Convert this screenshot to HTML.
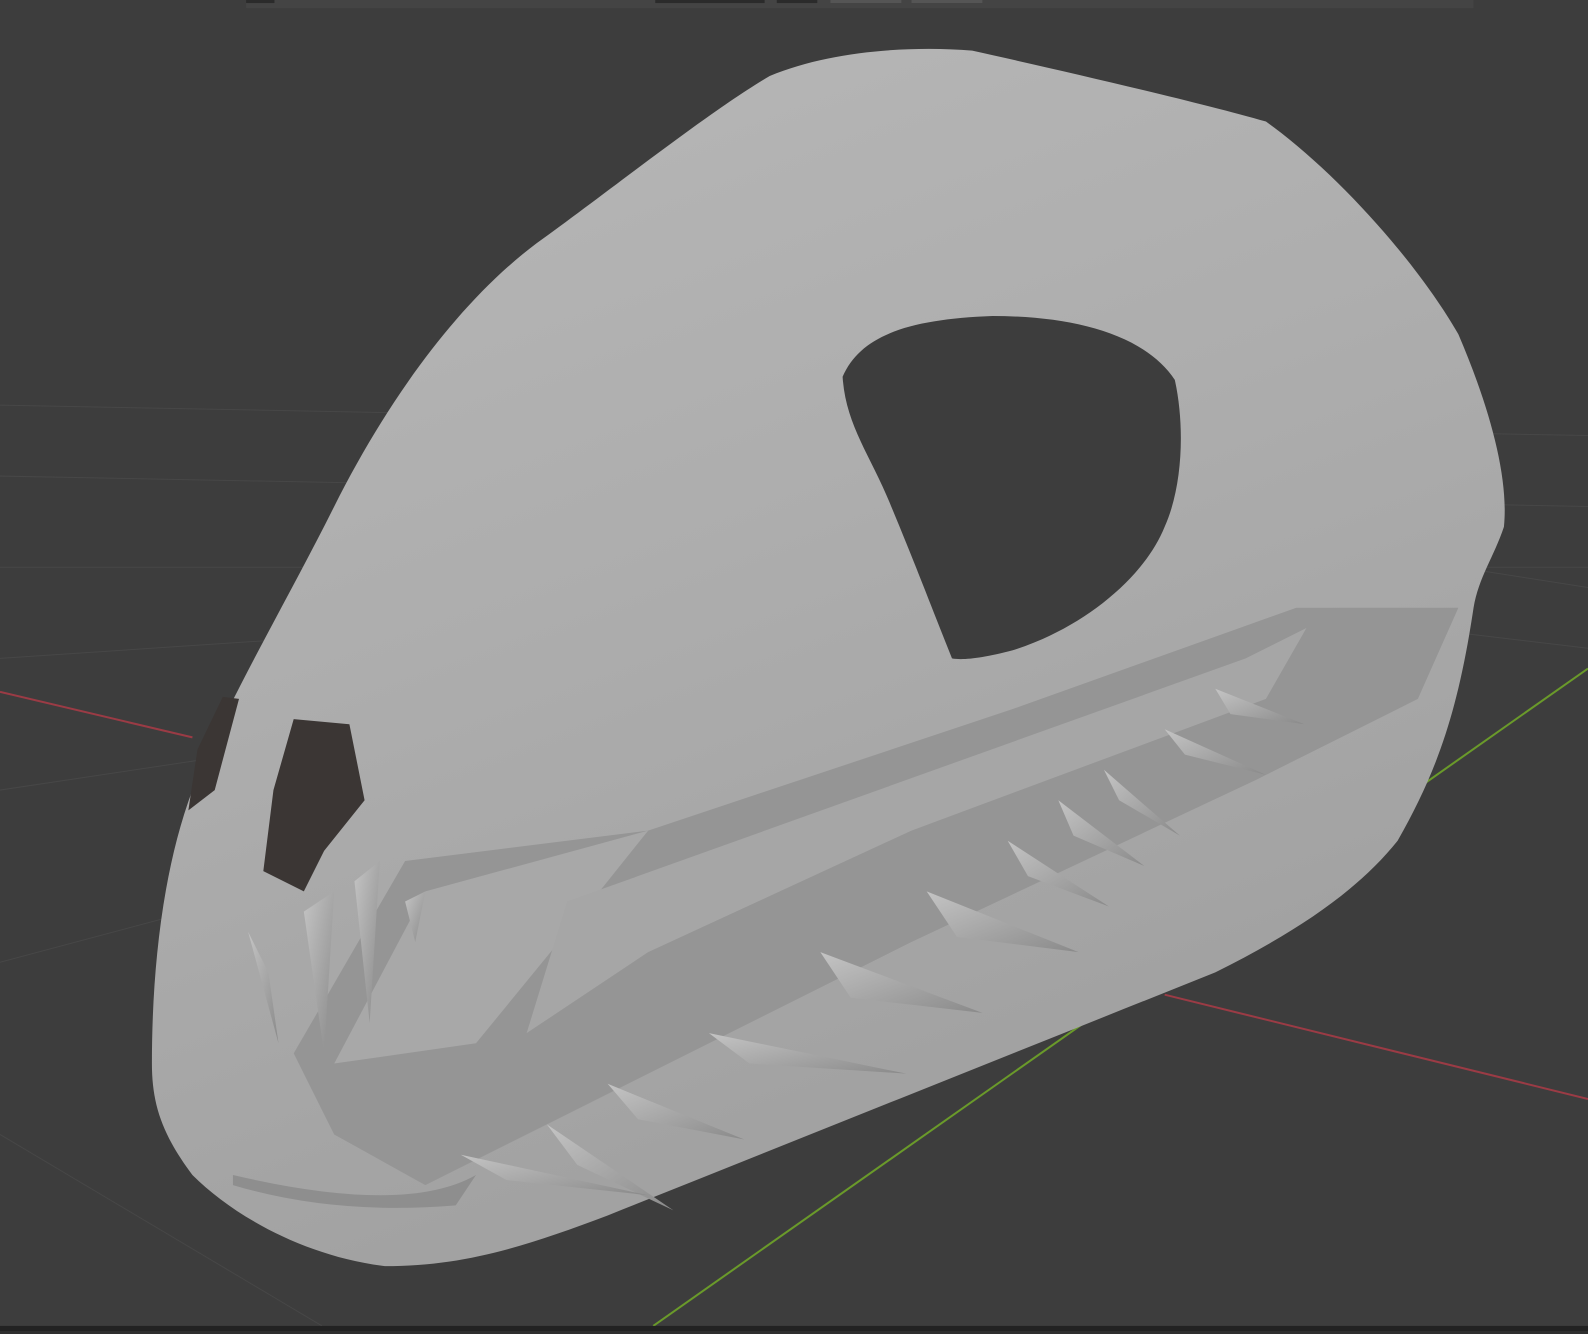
<!DOCTYPE html>
<html><head><meta charset="utf-8"><style>
html,body{margin:0;padding:0;background:#3d3d3d;overflow:hidden}
svg{display:block}
</style></head><body>
<svg width="1588" height="1334" viewBox="0 0 1568 1317" preserveAspectRatio="none" xmlns="http://www.w3.org/2000/svg">
<defs>
<linearGradient id="sk" x1="0" y1="0" x2="0.4" y2="1">
<stop offset="0" stop-color="#b8b8b8"/><stop offset="0.5" stop-color="#adadad"/><stop offset="1" stop-color="#a0a0a0"/>
</linearGradient>
<linearGradient id="tt" x1="0" y1="0" x2="1" y2="1">
<stop offset="0" stop-color="#c4c4c4"/><stop offset="1" stop-color="#8a8a8a"/>
</linearGradient>
</defs>
<rect width="1568" height="1317" fill="#3d3d3d"/>
<rect x="243" y="0" width="1212" height="8" fill="#444"/>
<rect x="243" y="0" width="28" height="3" fill="#2b2b2b"/>
<rect x="647" y="0" width="108" height="3" fill="#2b2b2b"/>
<rect x="767" y="0" width="40" height="3" fill="#2b2b2b"/>
<rect x="820" y="0" width="70" height="3" fill="#555"/>
<rect x="900" y="0" width="70" height="3" fill="#555"/>
<g stroke="#474747" stroke-width="1" fill="none">
<line x1="0" y1="400" x2="1568" y2="430"/><line x1="0" y1="470" x2="1568" y2="500"/>
<line x1="0" y1="560" x2="1568" y2="560"/><line x1="0" y1="650" x2="600" y2="610"/>
<line x1="0" y1="780" x2="400" y2="720"/><line x1="0" y1="950" x2="300" y2="870"/>
<line x1="0" y1="1120" x2="318" y2="1309"/><line x1="1440" y1="560" x2="1568" y2="580"/>
<line x1="1400" y1="620" x2="1568" y2="640"/>
</g>
<line x1="0" y1="683" x2="190" y2="728" stroke="#9b3b45" stroke-width="2"/>
<line x1="1150" y1="982" x2="1568" y2="1085" stroke="#9b3b45" stroke-width="2"/>
<line x1="645" y1="1309" x2="1568" y2="660" stroke="#6a9a2a" stroke-width="2"/>
<path d="M150,1050 C150,960 160,860 190,780 C220,700 280,600 330,500 C380,400 450,300 530,240 C600,190 700,110 760,75 C820,50 900,45 960,50 C1050,70 1180,100 1250,120 C1320,170 1400,260 1440,330 C1470,400 1490,470 1485,520 C1475,550 1460,570 1455,600 C1440,700 1420,760 1380,830 C1340,880 1280,920 1200,960 C1100,1000 1000,1040 900,1080 C800,1120 700,1160 600,1200 C520,1230 460,1250 380,1250 C300,1240 230,1200 190,1160 C160,1120 150,1090 150,1050 Z" fill="url(#sk)"/>
<path d="M400,850 L640,820 L1000,700 L1280,600 L1440,600 L1400,690 L1240,770 L900,930 L560,1100 L420,1170 L330,1120 L290,1040 Z" fill="#959595"/>
<path d="M420,880 L640,820 L560,920 L470,1030 L330,1050 Z" fill="#a8a8a8"/>
<path d="M560,890 L1230,650 L1290,620 L1250,690 L900,820 L640,940 L520,1020 Z" fill="#a6a6a6"/>
<g fill="url(#tt)">
<path d="M1200,680 L1288,715 L1215,705Z"/><path d="M1150,720 L1250,765 L1170,745Z"/>
<path d="M1090,760 L1165,825 L1105,790Z"/><path d="M1045,790 L1130,855 L1060,825Z"/>
<path d="M995,830 L1095,895 L1015,865Z"/><path d="M915,880 L1065,940 L945,925Z"/>
<path d="M810,940 L970,1000 L840,985Z"/><path d="M700,1020 L895,1060 L740,1050Z"/>
<path d="M600,1070 L735,1125 L630,1105Z"/><path d="M540,1110 L665,1195 L570,1150Z"/>
<path d="M455,1140 L640,1180 L500,1165Z"/>
<path d="M245,920 L275,1030 L265,960Z"/><path d="M300,900 L330,880 L320,1040 Z"/>
<path d="M350,870 L375,850 L365,1010Z"/><path d="M400,890 L420,880 L410,930Z"/>
</g>
<path d="M832,372 C850,330 900,315 980,312 C1060,312 1130,330 1160,375 C1170,420 1168,480 1150,520 C1130,570 1070,620 1000,642 C970,650 950,652 940,650 C920,600 905,560 880,500 C860,450 835,420 832,372 Z" fill="#3d3d3d"/>
<path d="M290,710 L345,715 L360,790 L320,840 L300,880 L260,860 L270,780 Z" fill="#3b3634"/>
<path d="M220,688 L236,690 L212,780 L186,800 L195,740 Z" fill="#3b3634"/>
<path d="M230,1160 Q400,1200 470,1160 L450,1190 Q330,1200 230,1170Z" fill="#8e8e8e"/>
<rect x="0" y="1309" width="1568" height="5" fill="#222"/>
<rect x="0" y="1314" width="1568" height="3" fill="#2e2e2e"/>
</svg>
</body></html>
